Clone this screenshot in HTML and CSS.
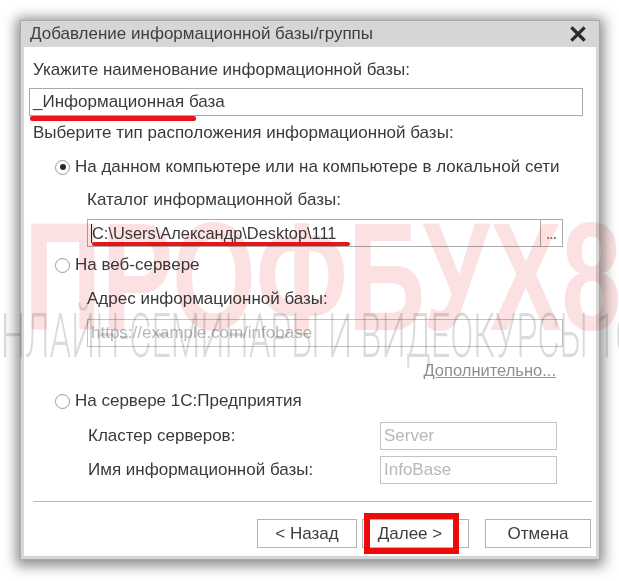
FILE: index.html
```html
<!DOCTYPE html>
<html lang="ru">
<head>
<meta charset="utf-8">
<link rel="stylesheet" href="styles.css">
</head>
<body>
<div class="page">
  <div class="dialog">
    <div class="titlebar">
      <span class="title">Добавление информационной базы/группы</span>
      <svg class="close" width="16" height="16" viewBox="0 0 16 16"><path d="M2.5 2.5 L13.5 13.5 M13.5 2.5 L2.5 13.5" stroke="#2b2b2b" stroke-width="3.2" stroke-linecap="square"/></svg>
    </div>
    <div class="content">
      <div class="label l-name">Укажите наименование информационной базы:</div>
      <div class="field f-name"><span class="val">_Информационная база</span><span class="mark mark1"></span></div>
      <div class="label l-type">Выберите тип расположения информационной базы:</div>
      <div class="radio-row rr1"><span class="radio checked"></span><span class="rtext">На данном компьютере или на компьютере в локальной сети</span></div>
      <div class="label sub l-cat">Каталог информационной базы:</div>
      <div class="field f-path"><span class="val"><span class="caret"></span>C:\Users\Александр\Desktop\111</span><span class="choose">...</span><span class="mark mark2"></span></div>
      <div class="radio-row rr2"><span class="radio"></span><span class="rtext">На веб-сервере</span></div>
      <div class="label sub l-addr">Адрес информационной базы:</div>
      <div class="field f-url disabled"><span class="val ph">https://example.com/infobase</span></div>
      <div class="more-row"><span class="more">Дополнительно...</span></div>
      <div class="radio-row rr3"><span class="radio"></span><span class="rtext">На сервере 1С:Предприятия</span></div>
      <div class="pair p1"><span class="plabel">Кластер серверов:</span><div class="field small"><span class="val ph">Server</span></div></div>
      <div class="pair p2"><span class="plabel">Имя информационной базы:</span><div class="field small"><span class="val ph">InfoBase</span></div></div>
      <div class="sep"></div>
      <div class="buttons">
        <div class="btn b-back">&lt; Назад</div>
        <div class="btn b-next">Далее &gt;<span class="redbox"></span></div>
        <div class="btn b-cancel">Отмена</div>
      </div>
    </div>
  </div>
  <div class="watermark">
    <div class="wm-big">ПРОФБУХ8</div>
    <div class="wm-small">ОНЛАЙН-СЕМИНАРЫ И ВИДЕОКУРСЫ 1С</div>
  </div>
</div>
</body>
</html>
```

FILE: styles.css
```css
html, body {
  margin: 0;
  padding: 0;
  background: #ffffff;
}
.page {
  position: relative;
  width: 619px;
  height: 581px;
  overflow: hidden;
  font-family: "Liberation Sans", Arial, sans-serif;
  color: #3a3a3a;
}
.dialog {
  position: relative;
  margin: 20px 0 0 20px;
  width: 580px;
  height: 540px;
  box-sizing: border-box;
  background: #d6d6d6;
  border: 1px solid #a9a9a9;
  padding: 0 3px 3px 3px;
  display: flex;
  flex-direction: column;
  box-shadow: 0 2px 12px 4px rgba(0,0,0,0.45);
}
.titlebar {
  height: 26px;
  flex: none;
  display: flex;
  align-items: center;
  justify-content: space-between;
  padding: 0 10px 0 6px;
}
.title {
  font-size: 17px;
  color: #3e3e3e;
}
.close { display: block; }
.content {
  flex: 1;
  background: #ffffff;
  display: flex;
  flex-direction: column;
  position: relative;
}
.label {
  font-size: 17px;
  line-height: 20px;
  height: 20px;
  white-space: nowrap;
}
.l-name { margin: 13px 0 0 9px; }
.l-type { margin: 7px 0 0 9px; }
.sub { margin-left: 63px; }
.l-cat { margin-top: 13px; }
.l-addr { margin-top: 14px; }
.field {
  position: relative;
  box-sizing: border-box;
  height: 28px;
  border: 1px solid #ababab;
  background: #fff;
  display: flex;
  align-items: center;
  font-size: 17px;
}
.field .val {
  flex: 1;
  padding-left: 3px;
  white-space: nowrap;
  display: flex;
  align-items: center;
}
.f-name { margin: 8px 0 0 5px; width: 554px; }
.f-path { margin: 9px 0 0 63px; width: 476px; font-size: 16.4px; }
.f-url { margin: 10px 0 0 63px; width: 476px; border-color: #c4c4c4; }
.ph { color: #b8b8b8; }
.caret {
  display: inline-block;
  width: 1px;
  height: 19px;
  background: #222;
}
.choose {
  width: 22px;
  align-self: stretch;
  border-left: 1px solid #ababab;
  color: #8c7b4a;
  font-weight: bold;
  font-size: 12px;
  display: flex;
  align-items: flex-end;
  justify-content: center;
  padding-bottom: 4px;
  box-sizing: border-box;
}
.mark {
  position: absolute;
  background: #e8161b;
  border-radius: 2px;
}
.mark1 { left: 0; top: 27px; width: 166px; height: 5px; }
.mark2 { left: 4px; top: 22px; width: 258px; height: 4px; }
.radio-row {
  display: flex;
  align-items: center;
  height: 20px;
  margin-left: 31px;
  font-size: 17px;
  white-space: nowrap;
}
.rr1 { margin-top: 14px; }
.rr2 { margin-top: 8px; }
.rr3 { margin-top: 11px; }
.radio {
  width: 15px;
  height: 15px;
  box-sizing: border-box;
  border: 1px solid #9a9a9a;
  border-radius: 50%;
  background: #fff;
  margin-right: 5px;
  position: relative;
  flex: none;
}
.radio.checked::after {
  content: "";
  position: absolute;
  left: 3.5px;
  top: 3.5px;
  width: 6px;
  height: 6px;
  border-radius: 50%;
  background: #2a2a2a;
}
.more-row {
  display: flex;
  justify-content: flex-end;
  margin: 13px 40px 0 0;
  height: 20px;
  line-height: 20px;
}
.more {
  font-size: 16.5px;
  color: #8f8f8f;
  text-decoration: underline;
}
.pair {
  display: flex;
  align-items: center;
  justify-content: space-between;
  margin-left: 64px;
  width: 469px;
  font-size: 17px;
}
.p1 { margin-top: 11px; }
.p2 { margin-top: 6px; }
.field.small { width: 177px; border-color: #c4c4c4; }
.sep {
  height: 1px;
  background: #b9b9b9;
  margin: 17px 4px 0 9px;
}
.buttons {
  display: flex;
  justify-content: flex-end;
  margin: 17px 5px 0 0;
}
.btn {
  position: relative;
  box-sizing: border-box;
  height: 29px;
  border: 1px solid #b3b3b3;
  background: #fff;
  font-size: 17px;
  color: #3c3c3c;
  display: flex;
  align-items: center;
  justify-content: center;
}
.b-back { width: 100px; }
.b-next { width: 107px; margin-left: 5px; padding-right: 11px; }
.b-cancel { width: 106px; margin-left: 16px; }
.redbox {
  position: absolute;
  left: 1px;
  top: -7px;
  width: 95px;
  height: 41px;
  box-sizing: border-box;
  border: 6px solid #ee0a0a;
}
.watermark {
  position: absolute;
  left: 0;
  top: 0;
  width: 619px;
  height: 581px;
  pointer-events: none;
  mix-blend-mode: multiply;
}
.wm-big {
  position: absolute;
  left: 24px;
  top: 200px;
  font-family: "Liberation Sans", Arial, sans-serif;
  font-weight: bold;
  font-size: 154px;
  line-height: 154px;
  color: rgba(232, 80, 80, 0.17);
  white-space: nowrap;
  transform: scaleX(0.7);
  transform-origin: left top;
}
.wm-small {
  position: absolute;
  left: -22px;
  top: 304px;
  font-family: Roboto, "Liberation Sans", sans-serif;
  font-weight: 300;
  font-size: 62px;
  line-height: 64px;
  color: rgba(0, 0, 0, 0.14);
  white-space: nowrap;
  transform: scaleX(0.55);
  transform-origin: left top;
}
```
